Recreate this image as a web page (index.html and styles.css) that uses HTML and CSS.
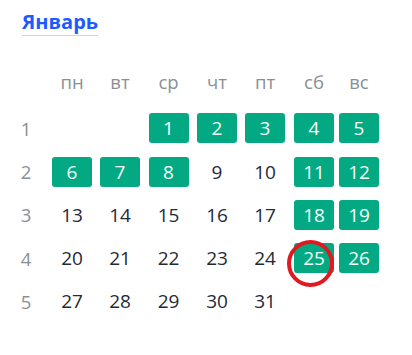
FILE: index.html
```html
<!DOCTYPE html>
<html lang="ru">
<head>
<meta charset="utf-8">
<link rel="stylesheet" href="styles.css">
</head>
<body>
<div class="page">
  <h1 class="title">Январь</h1>
  <div class="cal">
    <div class="hd"></div><div class="hd">пн</div><div class="hd">вт</div><div class="hd">ср</div><div class="hd">чт</div><div class="hd">пт</div><div class="hd">сб</div><div class="hd">вс</div>

    <div class="wk">1</div><div></div><div></div><div class="d on">1</div><div class="d on">2</div><div class="d on">3</div><div class="d on">4</div><div class="d on">5</div>

    <div class="wk">2</div><div class="d on">6</div><div class="d on">7</div><div class="d on">8</div><div class="d">9</div><div class="d">10</div><div class="d on">11</div><div class="d on">12</div>

    <div class="wk">3</div><div class="d">13</div><div class="d">14</div><div class="d">15</div><div class="d">16</div><div class="d">17</div><div class="d on">18</div><div class="d on">19</div>

    <div class="wk">4</div><div class="d">20</div><div class="d">21</div><div class="d">22</div><div class="d">23</div><div class="d">24</div><div class="d on today">25</div><div class="d on">26</div>

    <div class="wk">5</div><div class="d">27</div><div class="d">28</div><div class="d">29</div><div class="d">30</div><div class="d">31</div><div></div><div></div>
  </div>
</div>
</body>
</html>
```

FILE: styles.css
```css
html, body {
  margin: 0;
  padding: 0;
  background: #ffffff;
}
body {
  font-family: "Open Sans", "Noto Sans", sans-serif;
  color: #1f2a36;
}
.page {
  padding: 9px 0 0 4px;
}
.title {
  display: inline-block;
  margin: 0 0 0 18px;
  font-size: 20px;
  font-weight: 700;
  line-height: 26px;
  color: #1c5cff;
  border-bottom: 1px solid #c3d3ff;
  padding-bottom: 0;
}
.cal {
  margin-top: 34px;
  display: grid;
  grid-template-columns: 44px 48px 48px 49px 48px 48px 50px 40px;
  grid-template-rows: repeat(6, 30px);
  row-gap: 13.3px;
  justify-items: center;
  align-items: center;
  font-size: 19px;
}
.hd {
  color: #8b8f94;
  font-size: 18.5px;
  margin-bottom: 7px;
}
.wk {
  color: #8b9096;
  font-size: 18.5px;
}
.d {
  width: 40px;
  height: 30px;
  display: flex;
  align-items: center;
  justify-content: center;
  border-radius: 3px;
}
.d.on {
  background: #03a982;
  color: #f4fffa;
}
.today {
  position: relative;
}
.today::after {
  content: "";
  position: absolute;
  left: -7px;
  top: -3px;
  width: 39px;
  height: 39px;
  border: 4px solid #e11a22;
  border-radius: 50%;
}
```
